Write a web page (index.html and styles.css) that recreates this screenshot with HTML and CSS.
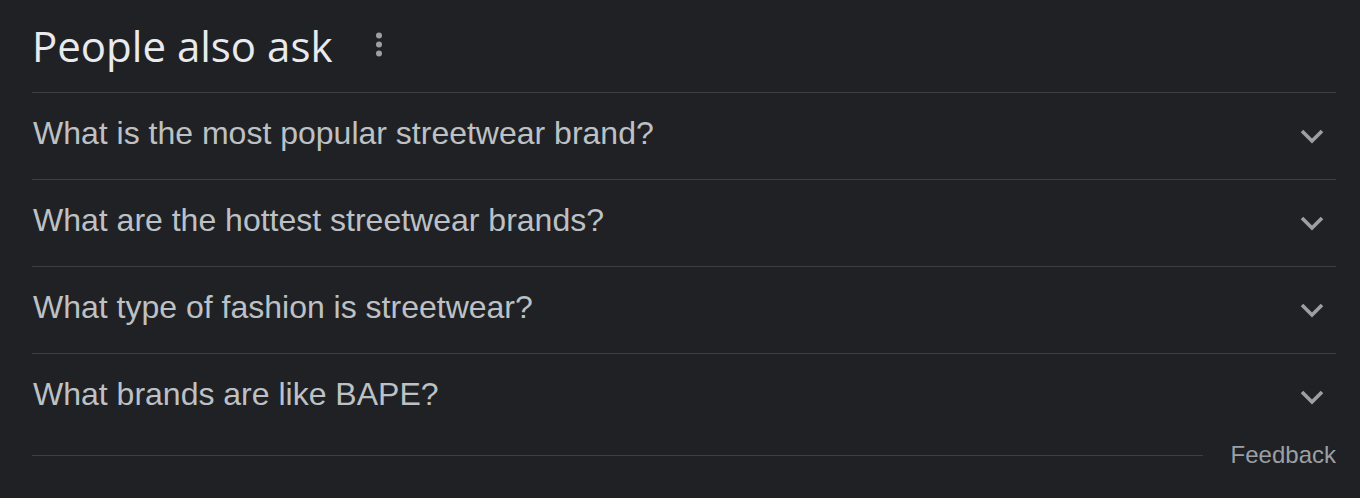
FILE: index.html
```html
<!DOCTYPE html>
<html>
<head>
<meta charset="utf-8">
<link rel="stylesheet" href="styles.css">
</head>
<body>
<div class="paa">
  <div class="header">
    <h2 class="title">People also ask</h2>
    <span class="dots">
      <svg width="8" height="27" viewBox="0 0 8 27"><circle cx="4" cy="4.5" r="3" fill="#9aa0a6"/><circle cx="4" cy="13.5" r="3" fill="#9aa0a6"/><circle cx="4" cy="22.5" r="3" fill="#9aa0a6"/></svg>
    </span>
  </div>
  <div class="list">
    <div class="row"><span class="q">What is the most popular streetwear brand?</span><svg class="chev" width="26" height="16" viewBox="0 0 26 16"><path d="M3 3 L13 13 L23 3" fill="none" stroke="#9aa0a6" stroke-width="3.6"/></svg></div>
    <div class="row"><span class="q">What are the hottest streetwear brands?</span><svg class="chev" width="26" height="16" viewBox="0 0 26 16"><path d="M3 3 L13 13 L23 3" fill="none" stroke="#9aa0a6" stroke-width="3.6"/></svg></div>
    <div class="row"><span class="q">What type of fashion is streetwear?</span><svg class="chev" width="26" height="16" viewBox="0 0 26 16"><path d="M3 3 L13 13 L23 3" fill="none" stroke="#9aa0a6" stroke-width="3.6"/></svg></div>
    <div class="row"><span class="q">What brands are like BAPE?</span><svg class="chev" width="26" height="16" viewBox="0 0 26 16"><path d="M3 3 L13 13 L23 3" fill="none" stroke="#9aa0a6" stroke-width="3.6"/></svg></div>
  </div>
  <div class="footer">
    <div class="line"></div>
    <span class="feedback">Feedback</span>
  </div>
</div>
</body>
</html>
```
FILE: styles.css
```css
html, body {
  margin: 0;
  padding: 0;
  background: #202124;
  height: 100%;
}
body {
  font-family: "Liberation Sans", Arial, sans-serif;
}
.paa {
  padding: 0 24px 0 32px;
}
.header {
  height: 92px;
  display: flex;
  align-items: center;
  gap: 43px;
}
.title {
  margin: 0;
  font-family: "Open Sans", "Noto Sans", sans-serif;
  font-weight: 400;
  font-size: 42px;
  color: #e8eaed;
  padding-bottom: 2px;
}
.dots {
  display: flex;
  padding-bottom: 3px;
}
.row {
  box-sizing: border-box;
  height: 87px;
  border-top: 1px solid #3c4043;
  display: flex;
  align-items: center;
  justify-content: space-between;
}
.q {
  color: #bdc1c6;
  font-size: 32px;
  padding-left: 1px;
  padding-bottom: 5px;
}
.chev {
  margin-right: 11px;
}
.footer {
  box-sizing: border-box;
  display: flex;
  align-items: center;
  height: 30px;
}
.line {
  flex: 1;
  height: 1px;
  background: #3c4043;
}
.feedback {
  color: #9aa0a6;
  font-size: 24px;
  margin-left: 28px;
}
```
